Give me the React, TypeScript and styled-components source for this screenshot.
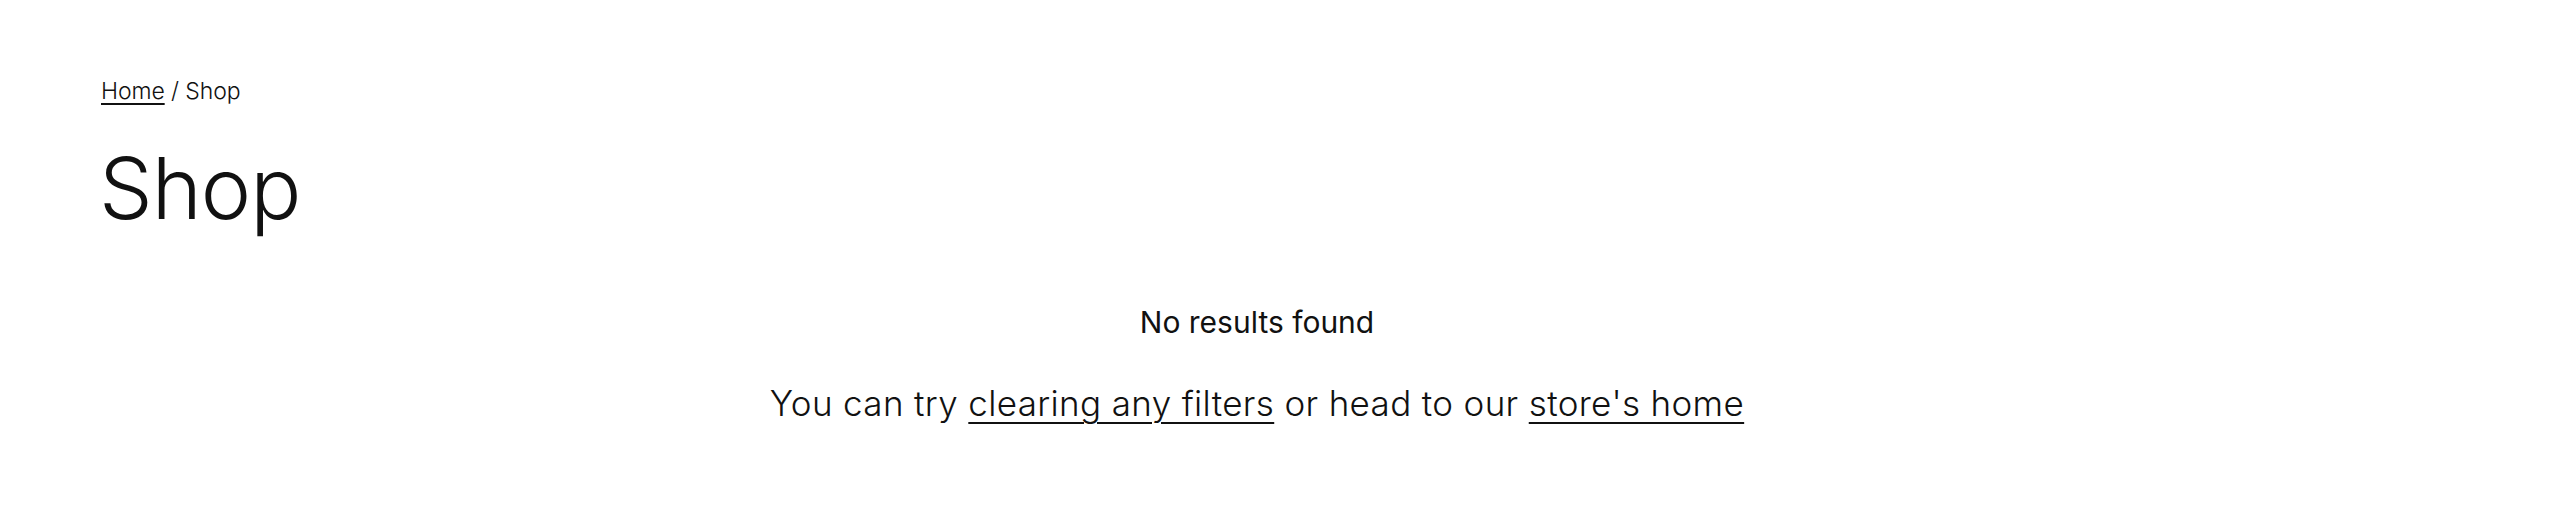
import React from "react";
import styled, { createGlobalStyle } from "styled-components";

const Global = createGlobalStyle`
  html, body { margin: 0; padding: 0; background: #ffffff; }
  body { font-family: Inter, "Noto Sans", sans-serif; color: #111111; }
`;

const Page = styled.main`
  padding: 73px 147px 60px 101px;
  display: flex;
  flex-direction: column;
`;

const Breadcrumbs = styled.nav`
  font-size: 23px;
  line-height: 36px;
  font-weight: 300;
  letter-spacing: -0.1px;
`;

const Crumb = styled.a`
  color: inherit;
  text-decoration: underline;
  text-underline-offset: 4px;
  text-decoration-thickness: 1.5px;
`;

const Title = styled.h1`
  margin: 28px 0 0 -2px;
  font-size: 85px;
  line-height: 103px;
  font-weight: 300;
  letter-spacing: -1px;
`;

const Empty = styled.section`
  margin-top: 60px;
  display: flex;
  flex-direction: column;
  align-items: center;
  text-align: center;
  gap: 32px;
`;

const EmptyTitle = styled.p`
  margin: 0;
  font-size: 30px;
  line-height: 45px;
  font-weight: 400;
  letter-spacing: 0;
`;

const EmptyText = styled.p`
  margin: 0;
  font-size: 35px;
  line-height: 52px;
  font-weight: 300;
  letter-spacing: 0.35px;
`;

const TextLink = styled.a`
  color: inherit;
  text-decoration: underline;
  text-underline-offset: 6px;
  text-decoration-thickness: 1.5px;
`;

export default function App() {
  return (
    <>
      <Global />
      <Page>
        <Breadcrumbs>
          <Crumb href="#">Home</Crumb> / Shop
        </Breadcrumbs>
        <Title>Shop</Title>
        <Empty>
          <EmptyTitle>No results found</EmptyTitle>
          <EmptyText>
            You can try <TextLink href="#">clearing any filters</TextLink> or head to our{" "}
            <TextLink href="#">store's home</TextLink>
          </EmptyText>
        </Empty>
      </Page>
    </>
  );
}
